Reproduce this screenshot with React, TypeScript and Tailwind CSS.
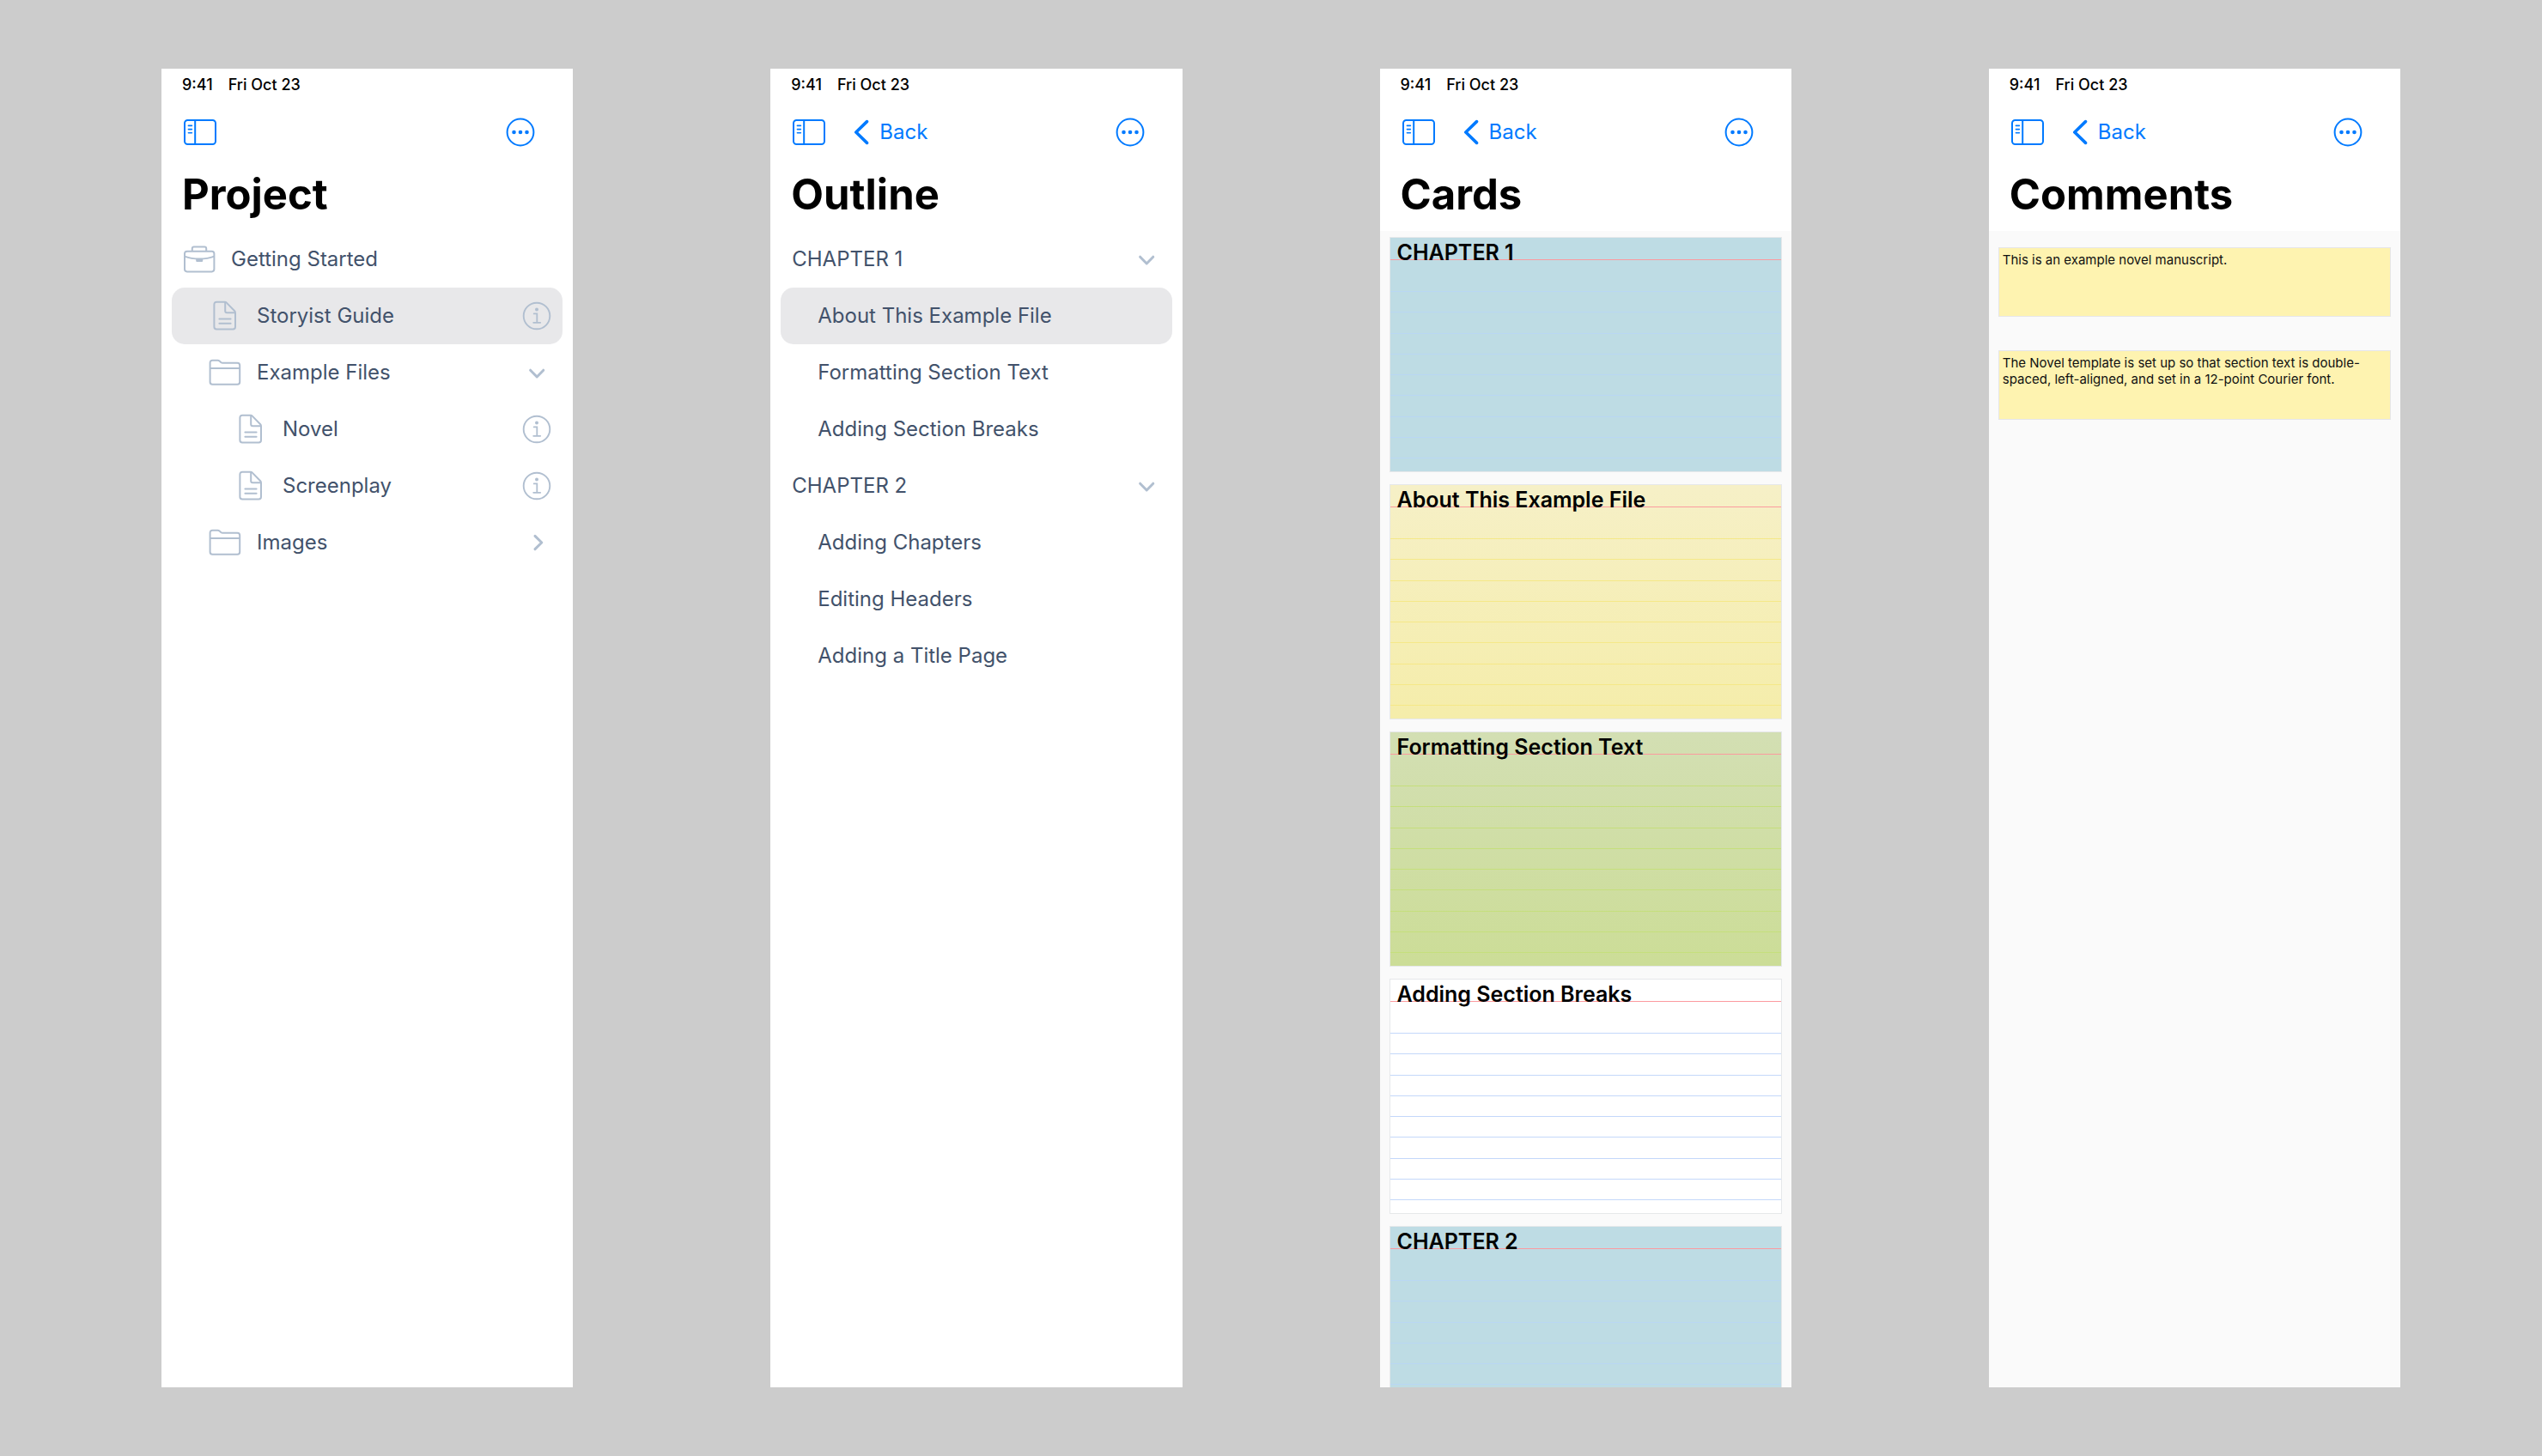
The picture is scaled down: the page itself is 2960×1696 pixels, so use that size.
import React, { useState } from "react";

type IconName = "briefcase" | "document" | "folder";

interface TreeRow {
  title: string;
  icon?: IconName;
  level: number;
  accessory?: "info" | "open" | "closed";
}

interface Card {
  title: string;
  color: "blue" | "yellow" | "green" | "white";
}

const projectRows: TreeRow[] = [
  { title: "Getting Started", icon: "briefcase", level: 0 },
  { title: "Storyist Guide", icon: "document", level: 1, accessory: "info" },
  { title: "Example Files", icon: "folder", level: 1, accessory: "open" },
  { title: "Novel", icon: "document", level: 2, accessory: "info" },
  { title: "Screenplay", icon: "document", level: 2, accessory: "info" },
  { title: "Images", icon: "folder", level: 1, accessory: "closed" },
];

const outlineRows: TreeRow[] = [
  { title: "CHAPTER 1", level: 0, accessory: "open" },
  { title: "About This Example File", level: 1 },
  { title: "Formatting Section Text", level: 1 },
  { title: "Adding Section Breaks", level: 1 },
  { title: "CHAPTER 2", level: 0, accessory: "open" },
  { title: "Adding Chapters", level: 1 },
  { title: "Editing Headers", level: 1 },
  { title: "Adding a Title Page", level: 1 },
];

const cards: Card[] = [
  { title: "CHAPTER 1", color: "blue" },
  { title: "About This Example File", color: "yellow" },
  { title: "Formatting Section Text", color: "green" },
  { title: "Adding Section Breaks", color: "white" },
  { title: "CHAPTER 2", color: "blue" },
];

const comments = [
  "This is an example novel manuscript.",
  "The Novel template is set up so that section text is double-spaced, left-aligned, and set in a 12-point Courier font.",
];

const cardColors = {
  blue: "bg-[#bedce4]",
  yellow: "bg-linear-to-b from-[#f6f0c7] to-[#f5edaa]",
  green: "bg-linear-to-b from-[#d3dfb3] to-[#ccdd97]",
  white: "bg-white",
};

const lineColors = {
  blue: "bg-[#b9d7f3]",
  yellow: "bg-[#f5e888]",
  green: "bg-[#c5df7c]",
  white: "bg-[#c4d8fa]",
};

const levelPadding = ["pl-0", "pl-[30px]", "pl-[60px]"];

function SidebarIcon() {
  return (
    <svg width="40" height="32" viewBox="0 0 40 32" fill="none" stroke="currentColor">
      <rect x="2" y="2" width="36" height="28" rx="3.5" strokeWidth="2" />
      <path d="M14.2 2v28" strokeWidth="2" />
      <path d="M6.4 8.4h4M6.4 12.6h4M6.4 16.8h4" strokeWidth="1.6" strokeLinecap="round" />
    </svg>
  );
}

function BackIcon() {
  return (
    <svg width="18" height="30" viewBox="0 0 18 30" fill="none" stroke="currentColor">
      <path d="M15.5 2.6 2.8 15l12.7 12.4" strokeWidth="3.6" strokeLinecap="round" strokeLinejoin="round" />
    </svg>
  );
}

function MoreIcon() {
  return (
    <svg width="34" height="34" viewBox="0 0 34 34" fill="none">
      <circle cx="17" cy="17" r="15.4" stroke="currentColor" strokeWidth="2" />
      <circle cx="9.5" cy="17" r="2.3" fill="currentColor" />
      <circle cx="17" cy="17" r="2.3" fill="currentColor" />
      <circle cx="24.5" cy="17" r="2.3" fill="currentColor" />
    </svg>
  );
}

function InfoIcon() {
  return (
    <svg width="34" height="34" viewBox="0 0 34 34" fill="none" stroke="currentColor">
      <circle cx="17" cy="17" r="15.3" strokeWidth="1.9" />
      <circle cx="17" cy="9.4" r="2" fill="currentColor" stroke="none" />
      <path d="M13.7 14.4h3.6v10.2M13.2 24.8h8" strokeWidth="1.8" strokeLinecap="round" />
    </svg>
  );
}

function ChevronIcon({ open }: { open: boolean }) {
  return (
    <svg width="34" height="34" viewBox="0 0 34 34" fill="none" stroke="currentColor">
      <path
        d={open ? "M9.6 14.2 17.2 22l7.6-7.8" : "M15 9.4l7.8 7.6-7.8 7.6"}
        strokeWidth="3"
        strokeLinecap="round"
        strokeLinejoin="round"
      />
    </svg>
  );
}

function RowIcon({ name }: { name: IconName }) {
  return (
    <svg
      width="38"
      height="36"
      viewBox="0 0 38 36"
      fill="none"
      stroke="currentColor"
      strokeWidth="2"
      strokeLinejoin="round"
      className="shrink-0"
    >
      {name === "briefcase" && (
        <>
          <rect x="2" y="8.8" width="34.4" height="23.6" rx="2.8" />
          <path d="M10.8 8.6V5.4c0-1.2.8-2 2-2h12.4c1.2 0 2 .8 2 2v3.2" />
          <path d="M2 14.6c5 1.9 11 2.9 17.2 2.9s12.2-1 17.2-2.9" />
          <path d="M15.2 17.4h8v2c0 1.200-.6 1.700-1.500 1.700h-5c-.9 0-1.500-.5-1.500-1.700z" fill="currentColor" stroke="none" />
        </>
      )}
      {name === "document" && (
        <>
          <path d="M9.2 1.8h9.600c.8 0 1.400.2 2 .8l9.400 9.600c.6.600.8 1.200.8 2v16.600c0 1.800-1 2.800-2.800 2.800h-19c-1.800 0-2.800-1-2.800-2.800V4.600c0-1.800 1-2.800 2.800-2.800z" />
          <path d="M19.200 2v10.200c0 1.300.7 2 2 2h9.600" />
          <path d="M12.400 21.400h13.200M12.400 26.800h13.200" strokeLinecap="round" />
        </>
      )}
      {name === "folder" && (
        <>
          <path d="M1.600 29V6.600c0-1.800 1-2.800 2.800-2.800h6.200c1 0 1.600.3 2.300 1l1.300 1.200c.7.600 1.200.8 2.200.8h17c1.800 0 2.800 1 2.800 2.800V29c0 1.800-1 2.800-2.800 2.800h-29c-1.800 0-2.800-1-2.800-2.800z" />
          <path d="M1.600 13h34.600" />
        </>
      )}
    </svg>
  );
}

interface PanelProps {
  title: string;
  back?: boolean;
  children: React.ReactNode;
}

function Panel({ title, back = true, children }: PanelProps) {
  return (
    <section className="flex flex-col min-w-0 min-h-0 overflow-hidden bg-white">
      <div className="flex items-center shrink-0 h-9 px-6 gap-[18px] text-[18px] font-medium">
        <span>9:41</span>
        <span>Fri Oct 23</span>
      </div>
      <nav className="flex items-center shrink-0 h-[76px] pl-[25px] pr-11 text-[#007aff]">
        <button type="button" aria-label="Toggle sidebar">
          <SidebarIcon />
        </button>
        {back && (
          <button type="button" className="flex items-center ml-8 gap-3 text-[24px]">
            <BackIcon />
            Back
          </button>
        )}
        <button type="button" aria-label="More" className="ml-auto">
          <MoreIcon />
        </button>
      </nav>
      <h1 className="flex items-center shrink-0 h-[77px] px-6 pb-2 text-[49px] font-bold">
        {title}
      </h1>
      {children}
    </section>
  );
}

function Tree({ rows, initial }: { rows: TreeRow[]; initial: string }) {
  const [selected, setSelected] = useState(initial);

  return (
    <ul className="px-3 text-[24px] text-[#42526b]">
      {rows.map((row) => (
        <li
          key={row.title}
          className={`flex items-center h-[66px] px-[13px] rounded-[15px] ${
            selected === row.title ? "bg-[#e8e8ea]" : ""
          }`}
        >
          <button
            type="button"
            onClick={() => setSelected(row.title)}
            className={`flex flex-1 items-center gap-[18px] text-left ${levelPadding[row.level]}`}
          >
            {row.icon && (
              <span className="text-[#b1bfd0]">
                <RowIcon name={row.icon} />
              </span>
            )}
            {row.title}
          </button>
          {row.accessory && (
            <button
              type="button"
              aria-label={row.accessory === "info" ? "Info" : "Expand"}
              className="text-[#b1bfd0]"
            >
              {row.accessory === "info" ? (
                <InfoIcon />
              ) : (
                <ChevronIcon open={row.accessory === "open"} />
              )}
            </button>
          )}
        </li>
      ))}
    </ul>
  );
}

function IndexCard({ title, color }: Card) {
  return (
    <article className={`shrink-0 h-[274px] border border-[#e6e8ea] ${cardColors[color]}`}>
      <div className="h-[26px] px-2 border-b border-[#fb9a9f]">
        <h2 className="relative text-[25px] leading-[34px] font-semibold">{title}</h2>
      </div>
      <div className="flex flex-col justify-between h-[231px] pt-9">
        {Array.from({ length: 9 }, (_, i) => (
          <div key={i} className={`h-px ${lineColors[color]}`} />
        ))}
      </div>
    </article>
  );
}

function App() {
  return (
    <main className="grid grid-cols-4 grid-rows-1 gap-[230px] h-screen pt-20 pb-20 pl-[188px] pr-[165px] bg-[#cccccc] text-black font-['Inter',sans-serif]">
      <Panel title="Project" back={false}>
        <Tree rows={projectRows} initial="Storyist Guide" />
      </Panel>
      <Panel title="Outline">
        <Tree rows={outlineRows} initial="About This Example File" />
      </Panel>
      <Panel title="Cards">
        <div className="flex flex-col flex-1 min-h-0 gap-3.5 px-[11px] pt-[7px] overflow-hidden bg-[#fafafa]">
          {cards.map((card) => (
            <IndexCard key={card.title} {...card} />
          ))}
        </div>
      </Panel>
      <Panel title="Comments">
        <div className="flex flex-col flex-1 gap-[39px] px-[11px] pt-[19px] bg-[#fafafa]">
          {comments.map((comment) => (
            <p
              key={comment}
              className="min-h-[81px] px-1 pt-1 border border-[#e6e6e8] bg-[#fef3b0] text-[15px] leading-[19px] text-[#111111]"
            >
              {comment}
            </p>
          ))}
        </div>
      </Panel>
    </main>
  );
}

export default App;
